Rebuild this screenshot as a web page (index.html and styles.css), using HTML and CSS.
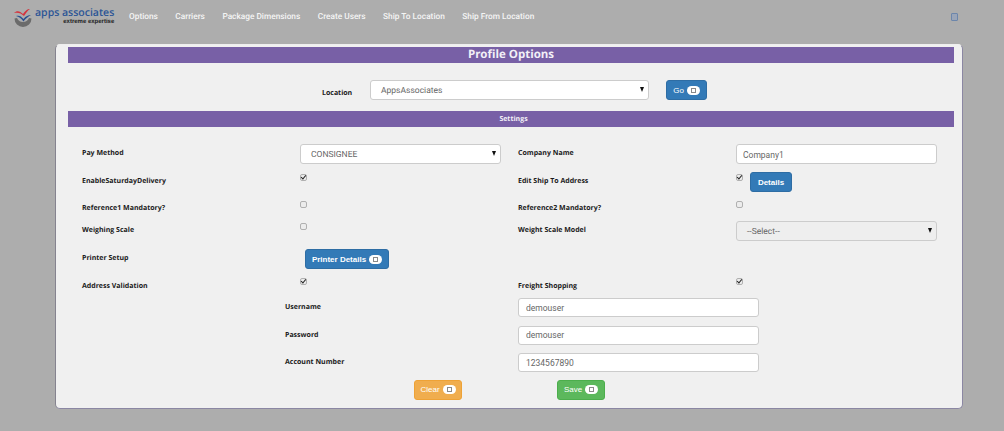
FILE: index.html
```html
<!DOCTYPE html>
<html lang="en">
<head>
  <meta charset="UTF-8">
  <meta name="viewport" content="width=device-width, initial-scale=1.0">
  <title>Profile Options</title>
  <link rel="stylesheet" href="styles.css">
</head>
<body>
  <nav class="navbar">
    <div class="logo">
      <svg class="logo-mark" width="20" height="20" viewBox="0 0 20 20">
        <path d="M1.500 11.500 A8.500 8.500 0 0 0 18.500 11.500 L16 11 A6.500 6.500 0 0 1 4 11 Z" fill="#6b6b6b"/>
        <path d="M1 6 C4 3 7 4 10 7 C12 4 14 2 17 2 C14 4 13 6 11 9 C8 6 5 5 1 6 Z" fill="#d5323c"/>
        <path d="M3 9 C6 8 8 9 10.500 12 C13 9 15 8 18 8 C15 10 13 11 10.500 14.500 C8 11 6 10 3 9 Z" fill="#2a4f8f"/>
      </svg>
      <div class="logo-text">
        <div class="logo-name">apps associates</div>
        <div class="logo-tag">extreme expertise</div>
      </div>
    </div>
    <a class="nav-link" href="#">Options</a>
    <a class="nav-link" href="#">Carriers</a>
    <a class="nav-link" href="#">Package Dimensions</a>
    <a class="nav-link" href="#">Create Users</a>
    <a class="nav-link" href="#">Ship To Location</a>
    <a class="nav-link" href="#">Ship From Location</a>
    <span class="nav-icon"></span>
  </nav>

  <main class="card">
    <h1 class="title-bar">Profile Options</h1>

    <div class="location-row">
      <label class="label location-label">Location</label>
      <div class="select location-select">AppsAssociates</div>
      <button class="btn btn-blue go-btn">Go <span class="badge"><i></i></span></button>
    </div>

    <h2 class="settings-bar">Settings</h2>

    <div class="settings">
      <div class="row row-a">
        <label class="label">Pay Method</label>
        <div class="select">CONSIGNEE</div>
        <label class="label">Company Name</label>
        <input class="input" type="text" value="Company1">
      </div>
      <div class="row row-b">
        <label class="label">EnableSaturdayDelivery</label>
        <div><input class="check" type="checkbox" checked></div>
        <label class="label">Edit Ship To Address</label>
        <div class="check-btn">
          <input class="check" type="checkbox" checked>
          <button class="btn btn-blue details-btn">Details</button>
        </div>
      </div>
      <div class="row row-c">
        <label class="label">Reference1 Mandatory?</label>
        <div><input class="check" type="checkbox"></div>
        <label class="label">Reference2 Mandatory?</label>
        <div><input class="check" type="checkbox"></div>
      </div>
      <div class="row row-a">
        <label class="label">Weighing Scale</label>
        <div><input class="check" type="checkbox"></div>
        <label class="label">Weight Scale Model</label>
        <div class="select select-disabled">--Select--</div>
      </div>
      <div class="row row-b">
        <label class="label">Printer Setup</label>
        <div class="printer-cell"><button class="btn btn-blue printer-btn">Printer Details <span class="badge"><i></i></span></button></div>
      </div>
      <div class="row row-c row-last">
        <label class="label">Address Validation</label>
        <div><input class="check" type="checkbox" checked></div>
        <label class="label">Freight Shopping</label>
        <div><input class="check" type="checkbox" checked></div>
      </div>
    </div>

    <div class="credentials">
      <div class="cred-row">
        <label class="label">Username</label>
        <input class="input" type="text" value="demouser">
      </div>
      <div class="cred-row">
        <label class="label">Password</label>
        <input class="input" type="text" value="demouser">
      </div>
      <div class="cred-row">
        <label class="label">Account Number</label>
        <input class="input" type="text" value="1234567890">
      </div>
    </div>

    <div class="actions">
      <button class="btn btn-orange">Clear <span class="badge"><i></i></span></button>
      <button class="btn btn-green">Save <span class="badge"><i></i></span></button>
    </div>
  </main>
</body>
</html>
```
FILE: styles.css
```css
body {
  margin: 0;
  height: 431px;
  overflow: hidden;
  background-color: #adadad;
  font-family: "Liberation Sans", Arial, sans-serif;
  text-rendering: geometricPrecision;
}

/* top navigation */
.navbar {
  display: flex;
  align-items: center;
  height: 33px;
  padding: 0 46px 0 13px;
}

.logo {
  display: flex;
  align-items: center;
  width: 116px;
  gap: 2px;
}

.logo-mark {
  flex: none;
}

.logo-name {
  font-family: "Open Sans", sans-serif;
  font-size: 10.500px;
  font-weight: 600;
  line-height: 11px;
  color: #2c5596;
  white-space: nowrap;
}

.logo-tag {
  font-size: 6px;
  font-weight: bold;
  line-height: 6px;
  color: #222;
  text-align: right;
  white-space: nowrap;
}

.nav-link {
  margin-right: 17.500px;
  font-family: Roboto, sans-serif;
  font-size: 8.300px;
  font-weight: 500;
  color: #f5f5f5;
  text-decoration: none;
  white-space: nowrap;
}

.nav-icon {
  box-sizing: border-box;
  width: 7px;
  height: 8px;
  margin-left: auto;
  border: 1px solid #6c86ab;
  border-radius: 1px;
  background-color: #9aa5b8;
}

/* main card */
.card {
  box-sizing: border-box;
  width: 908px;
  height: 365px;
  margin: 11px 0 0 55px;
  padding: 2px 8px 0 12px;
  background-color: #f0f0f0;
  border: 1px solid #eee;
  border-right-color: #8b87a3;
  border-bottom-color: #8b87a3;
  border-left-color: #85838f;
  border-radius: 5px;
}

.title-bar,
.settings-bar {
  margin: 0;
  background-color: #7860a6;
  color: #f2f0f7;
  text-align: center;
  font-family: "Open Sans", sans-serif;
  font-weight: bold;
}

.title-bar {
  height: 16px;
  font-size: 11.500px;
  line-height: 16px;
}

.settings-bar {
  height: 16px;
  padding-left: 5px;
  font-size: 7px;
  line-height: 17px;
}

.location-row {
  display: flex;
  align-items: flex-start;
  box-sizing: border-box;
  height: 48px;
  padding: 17px 0 0 254px;
}

.location-label {
  width: 48px;
  padding-top: 9px;
}

.location-select {
  width: 279px;
  height: 20px;
  margin-right: 17px;
}

.label {
  font-family: "Open Sans", sans-serif;
  font-size: 7px;
  font-weight: 700;
  line-height: 10px;
  color: #1a1a1a;
  white-space: nowrap;
}

.select,
.input {
  box-sizing: border-box;
  height: 20px;
  padding: 0 10px;
  background-color: #fff;
  border: 1px solid #ccc;
  border-radius: 3px;
  font-family: Roboto, sans-serif;
  font-size: 8.500px;
  line-height: 18px;
  color: #666;
}

.select {
  position: relative;
  line-height: 21px;
}

.select::after {
  content: "";
  position: absolute;
  top: 6px;
  right: 4px;
  border-top: 5px solid #111;
  border-left: 2.500px solid transparent;
  border-right: 2.500px solid transparent;
}

.select-disabled {
  background-color: #eee;
}

.settings {
  padding: 17px 0 0 14px;
}

.row {
  display: grid;
  grid-template-columns: repeat(4, 218px);
  align-items: start;
}

.row-a { height: 28px; }
.row-b { height: 27px; }
.row-c { height: 22px; }

.row .label {
  padding-top: 5px;
}

.row-last .label {
  padding-top: 6px;
}

.row .select,
.row .input {
  width: 201px;
}

.row .input {
  padding: 1px 6px 0;
}

/* custom checkbox so it stays grey at this small size */
.check {
  appearance: none;
  display: block;
  position: relative;
  box-sizing: border-box;
  width: 7px;
  height: 7px;
  margin: 2px 0 0;
  background-color: #ececec;
  border: 1px solid #b0b0b0;
  border-radius: 2px;
}

.check:checked::after {
  content: "";
  position: absolute;
  top: -1px;
  left: 1px;
  width: 1.500px;
  height: 4px;
  border-right: 1.200px solid #222;
  border-bottom: 1.200px solid #222;
  transform: rotate(40deg);
}

.check-btn {
  display: flex;
  gap: 7px;
}

.printer-cell {
  display: flex;
}

/* buttons */
.btn {
  box-sizing: border-box;
  display: inline-flex;
  align-items: center;
  justify-content: center;
  gap: 3px;
  height: 20px;
  padding: 0;
  border: 1px solid transparent;
  border-radius: 3px;
  font-family: "Liberation Sans", Arial, sans-serif;
  font-size: 8px;
  color: #fff;
}

.btn-blue {
  background-color: #337ab7;
  border-color: #2e6da4;
}

.btn-orange {
  background-color: #f0ad4e;
  border-color: #eea236;
}

.btn-green {
  background-color: #5cb85c;
  border-color: #4cae4c;
}

.go-btn {
  width: 41px;
}

.details-btn {
  width: 42px;
  font-weight: bold;
}

.printer-btn {
  width: 84px;
  margin-left: 5px;
  font-weight: bold;
}

.badge {
  display: inline-flex;
  align-items: center;
  justify-content: center;
  width: 13px;
  height: 9px;
  background-color: #fff;
  border-radius: 5px;
}

.badge i {
  display: block;
  box-sizing: border-box;
  width: 5px;
  height: 5px;
  border: 1px solid #8a8a8a;
}

/* credentials */
.credentials {
  padding-left: 217px;
}

.cred-row {
  display: grid;
  grid-template-columns: 233px 241px;
  height: 27.500px;
  align-items: start;
}

.cred-row .label {
  padding-top: 5px;
}

.cred-row .input {
  height: 19px;
  padding: 0 7px;
  line-height: 17px;
}

.actions {
  display: flex;
  gap: 95px;
  padding: 0 0 0 346px;
  margin-top: -1px;
}

.actions .btn {
  width: 48px;
}
```
